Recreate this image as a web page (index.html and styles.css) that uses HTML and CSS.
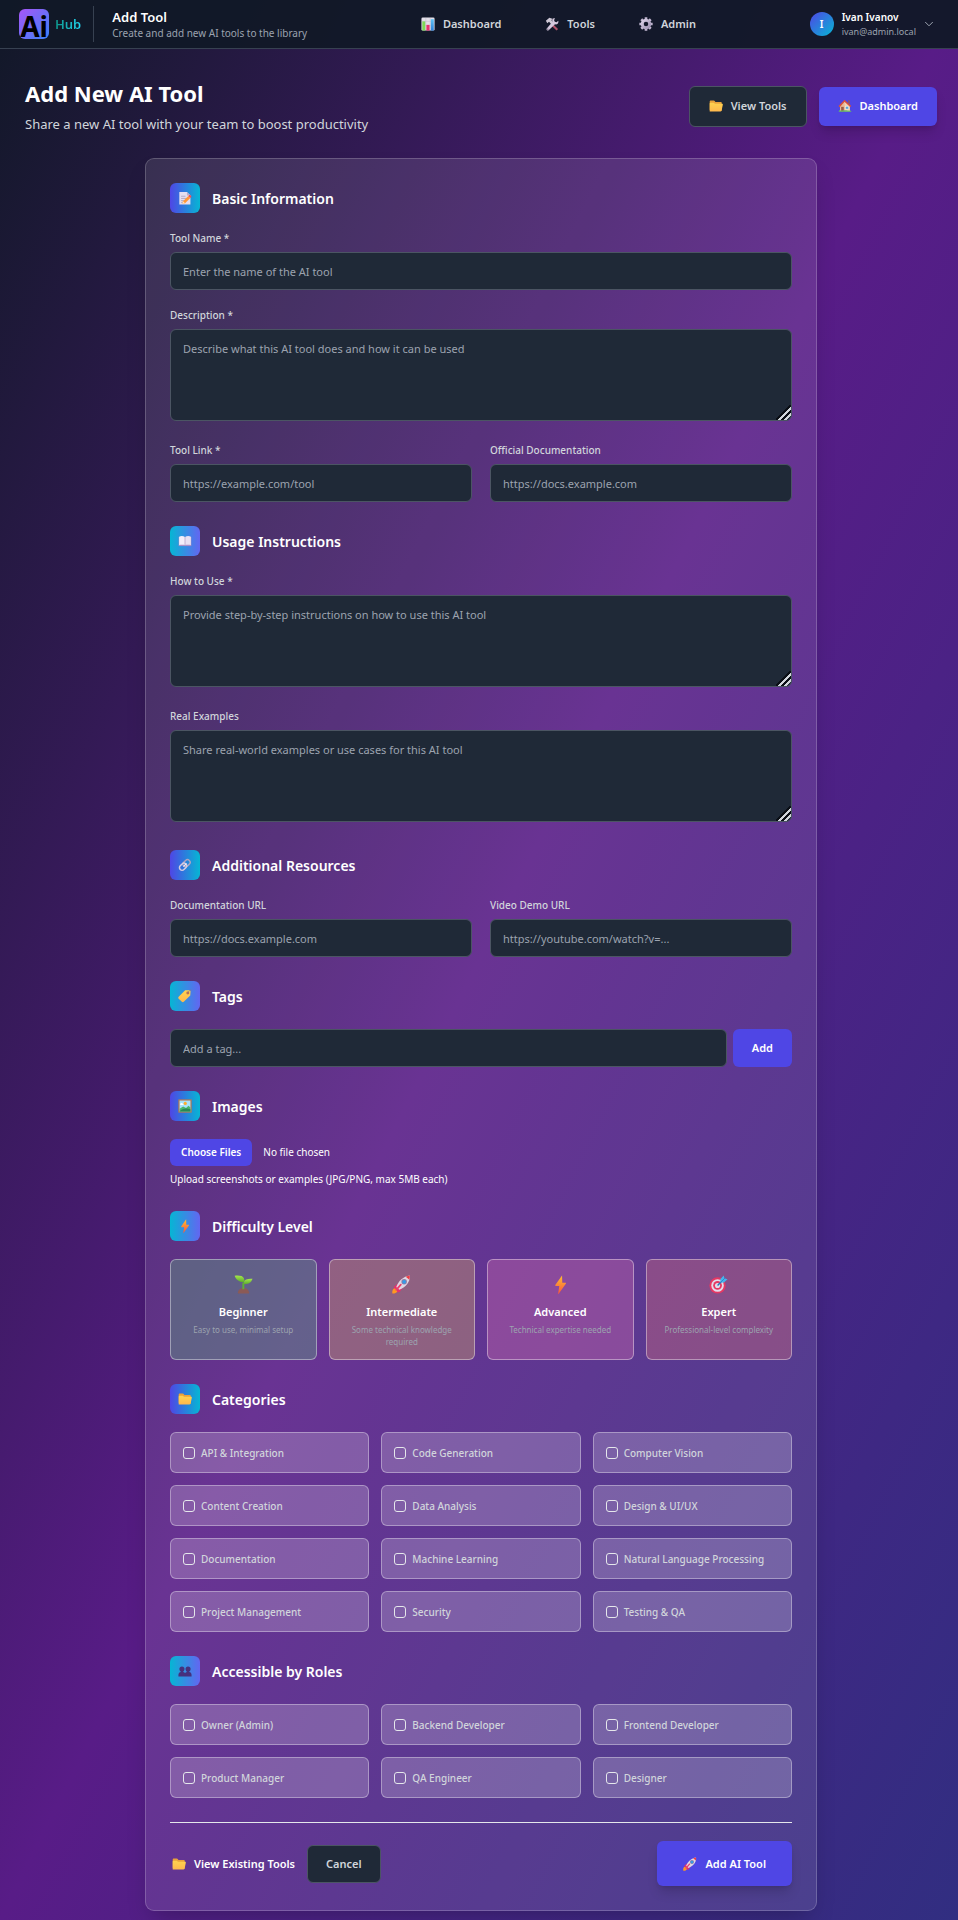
FILE: index.html
```html
<!DOCTYPE html>
<html lang="en">
<head>
<meta charset="utf-8">
<meta name="viewport" content="width=device-width, initial-scale=1">
<title>Add Tool - Ai Hub</title>
<link rel="stylesheet" href="styles.css">
</head>
<body>
<svg class="sprite" aria-hidden="true">
  <defs>
    <linearGradient id="g-folder" x1="0" y1="0" x2="0" y2="1"><stop offset="0" stop-color="#ffd34f"/><stop offset="1" stop-color="#ffb84d"/></linearGradient>
    <linearGradient id="g-bolt" x1="0" y1="0" x2="0" y2="1"><stop offset="0" stop-color="#ffc02e"/><stop offset="1" stop-color="#f8553f"/></linearGradient>
    <linearGradient id="g-blue" x1="0" y1="0" x2="0" y2="1"><stop offset="0" stop-color="#5fc3f5"/><stop offset="1" stop-color="#2b7fd8"/></linearGradient>
    <linearGradient id="g-gear" x1="0" y1="0" x2="1" y2="1"><stop offset="0" stop-color="#d9cfe6"/><stop offset="1" stop-color="#9f93b3"/></linearGradient>
    <linearGradient id="g-leaf" x1="0" y1="0" x2="0" y2="1"><stop offset="0" stop-color="#a6e84a"/><stop offset="1" stop-color="#5cab2e"/></linearGradient>
  </defs>
  <symbol id="i-chart" viewBox="0 0 16 16">
    <rect x="0.5" y="0.5" width="15" height="15" rx="1.5" fill="#e3dfe9"/>
    <path d="M1 5h14M1 10h14M5.5 1v14M10.5 1v14" stroke="#c3bccd" stroke-width=".6"/>
    <rect x="1.5" y="5" width="3.4" height="10.5" fill="#7ed957"/><rect x="6.2" y="9" width="3.6" height="6.500" fill="#e8336e"/><rect x="11.2" y="2.500" width="3.400" height="13" fill="url(#g-blue)"/>
  </symbol>
  <symbol id="i-tools" viewBox="0 0 16 16">
    <path d="M9.300 8.300l5.600 5.400-1.700 1.700-5.600-5.400z" fill="#b3536b"/>
    <path d="M1 4.200L5 .8l4.300 1.400-2 1.300 2.600 4.200-1.900 1.500-3.400-3.800-2 1.600z" fill="#cfc8d6"/>
    <path d="M11.300 1.200l-.9 2.500.8 1.800 2 .4 2-1.500c.5 3-1.400 4.600-3.800 4L4.200 15.200c-1.500.9-3.100-.8-2.200-2.100l6.400-7.400C7.700 3.200 9 1.200 11.300 1.200z" fill="#d6c8de"/>
    <circle cx="3.200" cy="13.900" r=".8" fill="#6d6478"/>
  </symbol>
  <symbol id="i-gear" viewBox="0 0 16 16">
    <path d="M8 .4v3M8 12.600v3M.4 8h3M12.600 8h3M2.600 2.600l2.100 2.100M11.300 11.300l2.100 2.100M2.600 13.400l2.100-2.100M11.300 4.700l2.100-2.100" stroke="#c3b8d2" stroke-width="3"/>
    <circle cx="8" cy="8" r="4.300" fill="none" stroke="url(#g-gear)" stroke-width="3.400"/>
  </symbol>
  <symbol id="i-folder" viewBox="0 0 16 16">
    <path d="M.8 3c0-.8.500-1.300 1.300-1.300h3.300c.7 0 1 .3 1.400.9l.5.700h6c.9 0 1.300.5 1.300 1.300v8.800H2.100c-.8 0-1.300-.5-1.300-1.300z" fill="#e9a23b"/>
    <path d="M.8 14.300V5.500c0-.7.500-1.100 1.200-1.100h3.500l1.300 1h8c.8 0 1.200.5 1 1.300l-1.400 6.500c-.2.800-.7 1.200-1.500 1.200z" fill="url(#g-folder)"/>
  </symbol>
  <symbol id="i-house" viewBox="0 0 16 16">
    <path d="M11.500 1.500h2v4h-2z" fill="#8c5a68"/>
    <path d="M2.300 7.300L7.500 2l6 5.500V14H2.300z" fill="#e8ba98"/>
    <path d="M7.500 2l6 5.500V14H8z" fill="#f2d3b5"/>
    <path d="M.6 8L7.500.8l7.700 7.100-1.300 1.300L8.900 4.600 7.500 3.100 2 9.300z" fill="#d8513c"/>
    <rect x="3.600" y="9" width="3" height="5.200" fill="#9b5a46"/><rect x="8.700" y="8.500" width="3.300" height="3" fill="#55a9df" stroke="#fff0e2" stroke-width=".5"/>
    <path d="M.8 14.600c0-1.600 1.500-2.100 2.500-1.200 1.400-.9 8-.9 9.400 0 1.200-.8 2.600 0 2.600 1.300z" fill="#63b967"/>
  </symbol>
  <symbol id="i-memo" viewBox="0 0 16 16">
    <path d="M1.500 1.200h8.700l4 4v10.200H1.500z" fill="#e4def0"/><path d="M10.200 1.200v4h4z" fill="#b7adc9"/>
    <path d="M3.500 6h5M3.500 8.500h7M3.500 11h4M3.500 13.300h3" stroke="#a79fba" stroke-width=".9"/>
    <path d="M5 14.800l.8-3 6-6 2.300 2.200-6 6z" fill="#ff9736"/><path d="M11.800 5.800l1.100-1.100c1.100-.9 3.100 1 2.200 2.200L14.100 8z" fill="#ed4d55"/><path d="M5 14.800l.8-3 2.300 2.200z" fill="#ffe3c0"/>
  </symbol>
  <symbol id="i-book" viewBox="0 0 16 16">
    <path d="M.8 3.300h14.400v10.500H.8z" fill="#a98fc7"/><path d="M1.300 3c2.300-1 4.900-.7 6.500.3v9.400c-1.800-.6-4.200-.6-6.500 0z" fill="#f3eefa"/><path d="M14.700 3c-2.300-1-4.900-.7-6.500.3v9.400c1.800-.6 4.200-.6 6.500 0z" fill="#e8e0f3"/><path d="M8 3.200v10" stroke="#b8abc9" stroke-width=".6"/>
  </symbol>
  <symbol id="i-link" viewBox="0 0 16 16" fill="none" stroke-linecap="round">
    <g transform="rotate(-45 8 8)"><rect x="6.200" y="4.800" width="9" height="6" rx="3" stroke="#afa3c1" stroke-width="1.700"/><rect x=".5" y="4.800" width="9" height="6" rx="3" stroke="#d5cce2" stroke-width="1.700"/><path d="M6 8h4" stroke="#eee7f4" stroke-width="1.300"/></g>
  </symbol>
  <symbol id="i-tag" viewBox="0 0 16 16">
    <path d="M8.200 1.500l4.600-.2c.9 0 1.500.6 1.500 1.500L14 7.500l-7.400 7.100c-.7.700-1.500.7-2.200 0L.8 11c-.7-.7-.7-1.500 0-2.200z" fill="url(#g-folder)"/><circle cx="11.200" cy="4.500" r="1.700" fill="#bc704f"/><path d="M11.200 4.500c.5-2 2.600-3.200 4.200-3.300" fill="none" stroke="#8e748d" stroke-width=".8"/>
  </symbol>
  <symbol id="i-picture" viewBox="0 0 16 16">
    <rect x=".4" y=".4" width="15.200" height="15.200" fill="#b67a54"/><rect x="1.800" y="1.800" width="12.400" height="12.400" fill="#a9e3fb"/><circle cx="8.300" cy="5" r="1.800" fill="#ffae2d"/><path d="M2.500 6c0-1.300 2.600-2 3.100-.4 1 0 .9 1.200.2 1.300H3c-.5-.1-.6-.5-.5-.9z" fill="#fff"/><path d="M1.800 11l4-2.400 3.400 1.700 2.800-2.500 2.200 1.900v4.500H1.800z" fill="#49b66c"/><path d="M1.800 14.200c3-3.400 8-4 12.400-2.400v2.400z" fill="#268957"/>
  </symbol>
  <symbol id="i-bolt" viewBox="0 0 16 16">
    <path d="M9.300.4L3.600 8.500c-.2.400 0 .8.400.8h3L6 15.600c0 .4.300.4.500.1l6-8.300c.3-.4.100-.8-.4-.8H9.500z" fill="url(#g-bolt)"/>
  </symbol>
  <symbol id="i-seedling" viewBox="0 0 20 20">
    <path d="M4 18.800c.4-3.100 2.600-5 6-5s5.600 1.900 6 5c0 .5-.3.700-.7.700H4.700c-.4 0-.7-.2-.7-.7z" fill="#8b5a56"/><path d="M8.800 15V8h2.100v7z" fill="#5fae35"/><path d="M.7.700c4.700-.5 8.600.2 9.700 2.600.7 1.600.3 3.300-.2 4.200C4.900 7.300 2.200 4.800.7.700z" fill="url(#g-leaf)"/><path d="M19.500 4c-4.800-.3-8.200.5-9 3-.3 1-.1 2 .3 2.600 4.300.2 7.200-1.300 8.700-5.600z" fill="url(#g-leaf)"/>
  </symbol>
  <symbol id="i-rocket" viewBox="0 0 20 20">
    <path d="M6.500 8.700L2.200 12l-.5 3.300 4.200-.8zM11.300 13.500L8 17.800l-3.200.5.800-4.200z" fill="#e3326f"/><path d="M1.700 14.400c1.500-1 4.300 1.400 3.600 3.300C4.600 19.300 2 19.800.4 19.500c-.3-1.700-.1-4.200 1.300-5.100z" fill="#ff9822"/><path d="M4.500 12.500C6.800 6.300 12 1.500 18.700.6c.8 6.900-4.800 12.600-11 15z" fill="#ddd7e4"/><path d="M14.500 1.900c1.500-.7 3-1.100 4.200-1.300.2 1.400 0 2.900-.5 4.500z" fill="#ee3c45"/><circle cx="12.800" cy="7.200" r="2.900" fill="#937ba4"/><circle cx="12.800" cy="7.200" r="2" fill="#349be7"/><path d="M9.300 10.100L4.500 15.700" stroke="#ee3e6b" stroke-width="1.800" stroke-linecap="round"/>
  </symbol>
  <symbol id="i-target" viewBox="0 0 20 20">
    <circle cx="9" cy="11" r="8.600" fill="#e63863"/><circle cx="9" cy="11" r="6.600" fill="#e3dceb"/><circle cx="9" cy="11" r="4.600" fill="#e63863"/><circle cx="9" cy="11" r="2.700" fill="#e3dceb"/><path d="M9 11l6-6" stroke="#237abd" stroke-width="1.500"/><path d="M12.300 7.700l-.5-3.100L15.500.5l.7 3 3.300.9-4 3.800z" fill="#44b5ed"/><path d="M12.300 7.700l5-5" stroke="#2578cc" stroke-width=".8"/>
  </symbol>
  <symbol id="i-people" viewBox="0 0 16 16" fill="#46307d">
    <circle cx="4.500" cy="5.700" r="2.900"/><circle cx="11.500" cy="5.700" r="2.900"/><path d="M.5 14.300v-2c0-2 1.400-3 2.700-3.200l.2-1.600h2.400l.2 1.600c1 .2 1.800.8 2 1.500.3-.8 1-1.300 2-1.500l.2-1.600h2.400l.2 1.600c1.400.3 2.700 1.200 2.700 3.200v2z"/>
  </symbol>
</svg>

<header class="topbar">
  <div class="brand">
    <a class="logo" href="#"><span class="logo-mark">Ai</span><span class="logo-name">Hub</span></a>
    <div class="page-id">
      <span class="page-id-title">Add Tool</span>
      <span class="page-id-sub">Create and add new AI tools to the library</span>
    </div>
  </div>
  <nav class="nav">
    <a href="#"><svg class="emoji"><use href="#i-chart"/></svg>Dashboard</a>
    <a href="#"><svg class="emoji"><use href="#i-tools"/></svg>Tools</a>
    <a href="#"><svg class="emoji"><use href="#i-gear"/></svg>Admin</a>
  </nav>
  <button class="user" type="button">
    <span class="avatar">I</span>
    <span class="user-text"><span class="user-name">Ivan Ivanov</span><span class="user-mail">ivan@admin.local</span></span>
    <svg class="chevron" viewBox="0 0 10 10"><path d="M1.500 3.300L5 6.800l3.500-3.500" fill="none" stroke="currentColor" stroke-linecap="round" stroke-linejoin="round"/></svg>
  </button>
</header>

<main class="main">
  <div class="intro">
    <div>
      <h1>Add New AI Tool</h1>
      <p>Share a new AI tool with your team to boost productivity</p>
    </div>
    <div class="intro-actions">
      <a class="btn btn-dark btn-view" href="#"><svg class="emoji"><use href="#i-folder"/></svg>View Tools</a>
      <a class="btn btn-primary" href="#"><svg class="emoji"><use href="#i-house"/></svg>Dashboard</a>
    </div>
  </div>

  <form class="panel">
    <section class="section">
      <h2><span class="badge"><svg class="emoji"><use href="#i-memo"/></svg></span>Basic Information</h2>
      <div class="fields">
        <div class="field"><label for="name">Tool Name *</label><input class="control" id="name" type="text" placeholder="Enter the name of the AI tool"></div>
        <div class="field"><label for="desc">Description *</label><textarea class="control" id="desc" placeholder="Describe what this AI tool does and how it can be used"></textarea></div>
        <div class="pair">
          <div class="field"><label for="link">Tool Link *</label><input class="control" id="link" type="url" placeholder="https://example.com/tool"></div>
          <div class="field"><label for="docs">Official Documentation</label><input class="control" id="docs" type="url" placeholder="https://docs.example.com"></div>
        </div>
      </div>
    </section>

    <section class="section">
      <h2><span class="badge badge-alt"><svg class="emoji"><use href="#i-book"/></svg></span>Usage Instructions</h2>
      <div class="fields">
        <div class="field"><label for="how">How to Use *</label><textarea class="control" id="how" placeholder="Provide step-by-step instructions on how to use this AI tool"></textarea></div>
        <div class="field"><label for="examples">Real Examples</label><textarea class="control" id="examples" placeholder="Share real-world examples or use cases for this AI tool"></textarea></div>
      </div>
    </section>

    <section class="section">
      <h2><span class="badge"><svg class="emoji"><use href="#i-link"/></svg></span>Additional Resources</h2>
      <div class="pair">
        <div class="field"><label for="docurl">Documentation URL</label><input class="control" id="docurl" type="url" placeholder="https://docs.example.com"></div>
        <div class="field"><label for="video">Video Demo URL</label><input class="control" id="video" type="url" placeholder="https://youtube.com/watch?v=..."></div>
      </div>
    </section>

    <section class="section">
      <h2><span class="badge badge-alt"><svg class="emoji"><use href="#i-tag"/></svg></span>Tags</h2>
      <div class="tag-row"><input class="control" type="text" aria-label="Tag" placeholder="Add a tag..."><button class="btn-add" type="button">Add</button></div>
    </section>

    <section class="section">
      <h2><span class="badge"><svg class="emoji"><use href="#i-picture"/></svg></span>Images</h2>
      <input class="file" id="images" type="file" multiple>
      <label class="hint" for="images">Upload screenshots or examples (JPG/PNG, max 5MB each)</label>
    </section>

    <section class="section">
      <h2><span class="badge badge-alt"><svg class="emoji"><use href="#i-bolt"/></svg></span>Difficulty Level</h2>
      <div class="levels">
        <button class="level level-beginner" type="button"><svg class="level-icon"><use href="#i-seedling"/></svg><strong>Beginner</strong><span>Easy to use, minimal setup</span></button>
        <button class="level level-intermediate" type="button"><svg class="level-icon"><use href="#i-rocket"/></svg><strong>Intermediate</strong><span>Some technical knowledge required</span></button>
        <button class="level level-advanced" type="button"><svg class="level-icon"><use href="#i-bolt"/></svg><strong>Advanced</strong><span>Technical expertise needed</span></button>
        <button class="level level-expert" type="button"><svg class="level-icon"><use href="#i-target"/></svg><strong>Expert</strong><span>Professional-level complexity</span></button>
      </div>
    </section>

    <section class="section">
      <h2><span class="badge"><svg class="emoji"><use href="#i-folder"/></svg></span>Categories</h2>
      <div class="checks">
        <label class="check"><input type="checkbox">API &amp; Integration</label>
        <label class="check"><input type="checkbox">Code Generation</label>
        <label class="check"><input type="checkbox">Computer Vision</label>
        <label class="check"><input type="checkbox">Content Creation</label>
        <label class="check"><input type="checkbox">Data Analysis</label>
        <label class="check"><input type="checkbox">Design &amp; UI/UX</label>
        <label class="check"><input type="checkbox">Documentation</label>
        <label class="check"><input type="checkbox">Machine Learning</label>
        <label class="check"><input type="checkbox">Natural Language Processing</label>
        <label class="check"><input type="checkbox">Project Management</label>
        <label class="check"><input type="checkbox">Security</label>
        <label class="check"><input type="checkbox">Testing &amp; QA</label>
      </div>
    </section>

    <section class="section">
      <h2><span class="badge badge-alt"><svg class="emoji"><use href="#i-people"/></svg></span>Accessible by Roles</h2>
      <div class="checks">
        <label class="check"><input type="checkbox">Owner (Admin)</label>
        <label class="check"><input type="checkbox">Backend Developer</label>
        <label class="check"><input type="checkbox">Frontend Developer</label>
        <label class="check"><input type="checkbox">Product Manager</label>
        <label class="check"><input type="checkbox">QA Engineer</label>
        <label class="check"><input type="checkbox">Designer</label>
      </div>
    </section>

    <div class="footer">
      <div class="footer-left">
        <a class="text-link" href="#"><svg class="emoji"><use href="#i-folder"/></svg>View Existing Tools</a>
        <button class="btn btn-dark btn-cancel" type="button">Cancel</button>
      </div>
      <button class="btn btn-primary btn-submit" type="submit"><svg class="emoji"><use href="#i-rocket"/></svg>Add AI Tool</button>
    </div>
  </form>
</main>
</body>
</html>
```
FILE: styles.css
```css
*, *::before, *::after { box-sizing: border-box; }

body {
  margin: 0;
  min-height: 100vh;
  font: 11px/18px "Segoe UI", "Noto Sans", sans-serif;
  color: #fff;
  background: linear-gradient(to bottom right, #111827, #581c87 50%, #312e81);
}

a { color: inherit; text-decoration: none; }
button, input, textarea { font: inherit; color: inherit; }
button { cursor: pointer; }

.sprite { position: absolute; width: 0; height: 0; }
.emoji { width: 14px; height: 14px; flex: none; }

/* Top bar */
.topbar {
  display: flex;
  justify-content: space-between;
  align-items: center;
  height: 49px;
  padding: 0 24px 0 19px;
  background: rgba(17, 24, 39, .95);
  border-bottom: 1px solid #374151;
}
.brand { display: flex; align-items: center; gap: 12px; }
.logo { display: flex; align-items: center; gap: 6px; }
.logo-mark {
  display: flex;
  justify-content: center;
  width: 30px;
  height: 30px;
  border-radius: 6px;
  background: linear-gradient(135deg, #a855f7, #3b82f6);
  color: #000;
  font-size: 28px;
  font-weight: 700;
  line-height: 34px;
}
.logo-name {
  font-size: 13px;
  font-weight: 600;
  background: linear-gradient(90deg, #0d9488, #22d3ee);
  -webkit-background-clip: text;
  background-clip: text;
  color: transparent;
}
.page-id {
  display: flex;
  flex-direction: column;
  justify-content: center;
  height: 36px;
  padding-left: 18px;
  border-left: 1px solid #374151;
}
.page-id-title { font-size: 13px; font-weight: 600; line-height: 18px; }
.page-id-sub { font-size: 10px; line-height: 15px; color: #9ca3af; }

.nav { display: flex; gap: 44px; color: #d1d5db; font-weight: 600; }
.nav a { display: flex; align-items: center; gap: 8px; }

.user {
  display: flex;
  align-items: center;
  gap: 8px;
  padding: 0;
  border: 0;
  background: none;
  text-align: left;
}
.avatar {
  display: grid;
  place-items: center;
  width: 24px;
  height: 24px;
  border-radius: 50%;
  background: linear-gradient(135deg, #4f46e5, #06b6d4);
  font-size: 10px;
  font-weight: 600;
}
.user-text { display: flex; flex-direction: column; }
.user-name { font-size: 10px; font-weight: 600; line-height: 15px; }
.user-mail { font-size: 9px; line-height: 13px; color: #9ca3af; }
.chevron { width: 10px; height: 10px; color: #9ca3af; }

/* Page intro */
.main { padding: 29px 21px 9px 25px; }
.intro {
  display: flex;
  justify-content: space-between;
  align-items: center;
  margin-bottom: 24px;
}
h1 { margin: 0 0 7px; font-size: 22px; line-height: 30px; font-weight: 700; }
.intro p { margin: 0; font-size: 13px; line-height: 19px; color: #d1d5db; }
.intro-actions { display: flex; align-items: center; gap: 12px; }

.btn {
  display: flex;
  align-items: center;
  gap: 8px;
  border-radius: 6px;
  font-weight: 600;
}
.btn-dark {
  padding: 0 18px;
  border: 1px solid #4b5563;
  background: #1f2937;
  color: #d1d5db;
}
.btn-view { height: 41px; padding: 0 19px; }
.btn-primary {
  height: 39px;
  padding: 0 19px;
  border: 0;
  background: #4f46e5;
  color: #fff;
  box-shadow: 0 8px 12px -2px rgba(0, 0, 0, .15), 0 3px 5px -3px rgba(0, 0, 0, .15);
}

/* Form panel */
.panel {
  max-width: 672px;
  margin: 0 auto;
  padding: 24px;
  border: 1px solid rgba(255, 255, 255, .2);
  border-radius: 9px;
  background: rgba(255, 255, 255, .1);
  box-shadow: 0 12px 24px -8px rgba(0, 0, 0, .25);
}
.section { margin-bottom: 24px; }
h2 {
  display: flex;
  align-items: center;
  gap: 12px;
  margin: 0 0 18px;
  font-size: 14px;
  line-height: 21px;
  font-weight: 600;
}
.badge {
  display: grid;
  place-items: center;
  width: 30px;
  height: 30px;
  border-radius: 6px;
  background: linear-gradient(90deg, #4f46e5, #06b6d4);
}
.badge-alt { background: linear-gradient(90deg, #06b6d4, #6366f1); }

.fields { display: grid; gap: 18px; }
.pair { display: grid; grid-template-columns: 1fr 1fr; gap: 18px; }
.field label {
  display: block;
  margin-bottom: 6px;
  font-size: 10px;
  font-weight: 500;
  line-height: 15px;
  color: #d1d5db;
}
.control {
  display: block;
  width: 100%;
  height: 38px;
  padding: 10px 12px;
  border: 1px solid #4b5563;
  border-radius: 6px;
  background: #1f2937;
  color: #fff;
}
.control::placeholder { color: #9ca3af; opacity: 1; }
textarea.control { height: 92px; margin-bottom: 4px; resize: vertical; }
textarea.control::-webkit-resizer {
  background: linear-gradient(135deg, transparent 46%, #0b0f16 46% 54%, #d1d5db 54% 64%, #0b0f16 64% 74%, #d1d5db 74% 84%, transparent 84%);
}

.tag-row { display: flex; gap: 6px; }
.btn-add {
  padding: 0 19px;
  border: 0;
  border-radius: 6px;
  background: #4f46e5;
  font-weight: 600;
}

.file { display: block; width: 100%; height: 27px; font-size: 10px; line-height: 15px; }
.file::file-selector-button {
  height: 27px;
  margin: 0 11px 0 0;
  padding: 0 11px;
  border: 0;
  border-radius: 6px;
  background: #4f46e5;
  color: #fff;
  font: inherit;
  font-weight: 600;
}
.hint { display: block; margin-top: 6px; font-size: 10px; line-height: 15px; }

.levels { display: grid; grid-template-columns: repeat(4, 1fr); gap: 12px; }
.level {
  display: flex;
  flex-direction: column;
  align-items: center;
  min-height: 101px;
  padding: 15px 12px 10px;
  border: 1px solid rgba(255, 255, 255, .4);
  border-radius: 6px;
}
.level-icon { width: 19px; height: 19px; margin-bottom: 9px; }
.level strong { font-weight: 600; line-height: 18px; }
.level span { font-size: 8px; line-height: 12px; margin-top: 3px; color: #9ca3af; }
.level-beginner { background: rgba(95, 170, 130, .38); }
.level-intermediate { background: rgba(213, 171, 103, .38); }
.level-advanced { background: rgba(210, 107, 174, .38); }
.level-expert { background: rgba(214, 110, 124, .38); }

.checks { display: grid; grid-template-columns: repeat(3, 1fr); gap: 12px; }
.check {
  display: flex;
  align-items: center;
  gap: 6px;
  height: 41px;
  padding: 0 12px;
  border: 1px solid rgba(255, 255, 255, .35);
  border-radius: 6px;
  background: rgba(255, 255, 255, .2);
  color: #d1d5db;
  font-size: 10px;
  font-weight: 500;
}
.check input {
  appearance: none;
  flex: none;
  width: 12px;
  height: 12px;
  margin: 0;
  border: 1px solid #e5e7eb;
  border-radius: 3px;
}
.check input:checked { background: #4f46e5; }

.footer {
  display: flex;
  justify-content: space-between;
  align-items: center;
  padding-top: 18px;
  border-top: 1px solid #e5e7eb;
}
.footer-left { display: flex; align-items: center; gap: 12px; }
.text-link { display: flex; align-items: center; gap: 8px; padding-left: 2px; font-weight: 600; }
.btn-cancel { height: 38px; }
.btn-submit { height: 45px; padding: 0 26px; }
```
